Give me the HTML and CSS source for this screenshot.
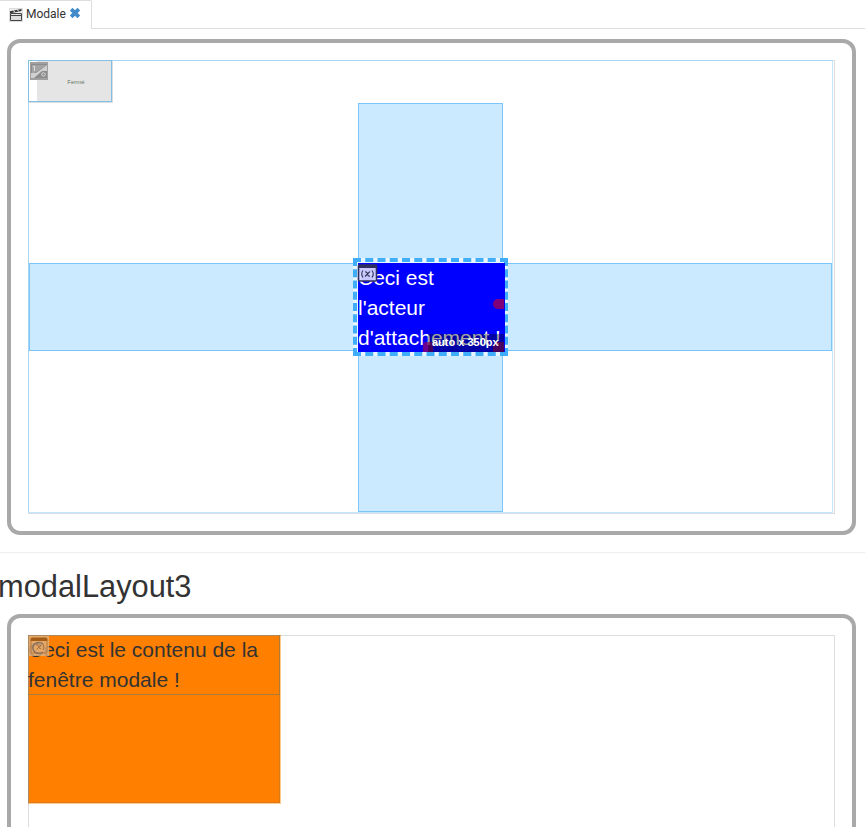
FILE: index.html
```html
<!DOCTYPE html>
<html lang="fr">
<head>
<meta charset="utf-8">
<title>Modale</title>
<link rel="stylesheet" href="styles.css">
</head>
<body>
<nav class="tabs">
  <div class="tab">
    <svg class="clap" viewBox="0 0 14 14"><rect x=".5" y=".5" width="13" height="13" fill="#eee" stroke="#ddd"/><path d="M1 3.2 12.5 1v2L1 5.2z" fill="#333"/><path d="M4 2.5 6 4M8 1.7 10 3.3" stroke="#ddd"/><path d="M1.5 5.5h11v7h-11z" fill="#ddd" stroke="#444"/><path d="M1 7.5h12" stroke="#444"/><path d="M3 6.5h2M7 6.5h2" stroke="#eee"/></svg>
    <span class="name">Modale</span>
    <svg class="close" viewBox="0 0 11 11"><path d="M2 2 9 9M9 2 2 9" stroke="#428bca" stroke-width="3.5"/></svg>
  </div>
  <div class="rest"></div>
</nav>
<main>
  <section class="frame first">
    <div class="canvas">
      <div class="glow"></div>
      <div class="closed"><span>Fermé</span>
        <svg class="badge" viewBox="0 0 18 18"><path fill="#a0a0a0" d="M0 0h18v18H0z"/><path fill="#8c8c8c" d="M1 2h16v14H1z"/><path fill="#a4a4a4" d="M2 3h14L2 13z"/><path d="M1 11h5L17 3v6h-5l-8 7H1z" fill="#d0d0d0"/><path d="M4.500 4v5M3 4.500h2" stroke="#ddd" fill="none"/><circle cx="13.500" cy="12.500" r="1.700" fill="none" stroke="#ddd"/></svg>
      </div>
      <div class="guide vertical"></div>
      <div class="guide horizontal"></div>
      <div class="selection">
        <div class="actor">Ceci est<br>l'acteur<br>d'attachement !</div>
        <svg class="badge var" viewBox="0 0 20 18"><rect x="1" y="1" width="18" height="16" rx="1" fill="#d5d5ff" fill-opacity=".94" stroke="#303060" stroke-width="1.6"/><path fill="#303060" d="M1 1h18v3H1z"/><path d="M5.500 6.500q-2.500 3.500 0 7M14.500 6.500q2.500 3.500 0 7M7.500 8q2-.5 2.500 2t2.500 2M12.500 7.500 7.500 12.500" fill="none" stroke="#333355" stroke-width="1.1"/></svg>
        <i class="handle side"></i>
        <div class="size">auto x 350px</div>
        <i class="handle left"></i>
        <i class="handle corner"></i>
      </div>
    </div>
  </section>
  <hr>
  <h2>modalLayout3</h2>
  <section class="frame second">
    <div class="canvas">
      <div class="modal">
        <div class="content">Ceci est le contenu de la<br>fenêtre modale !</div>
        <svg class="badge orange" viewBox="0 0 20 20"><path d="M0 0h20v20H0z" fill="#ddb382" fill-opacity=".8"/><path d="M2 5V3q0-1 1-1h14q1 0 1 1v2" fill="#a55d16" stroke="#a55d16"/><path d="M2 5v12h16V5" fill="none" stroke="#bd7937"/><path d="M14 8a6 5.500 0 1 0 0 8" fill="none" stroke="#8c7060" stroke-width="1.6"/><path d="M7 9q2-1 2.500 1.500t2.500 2M12 9l-4.500 4.500M14 8q2 3 0 6" fill="none" stroke="#a96b38"/></svg>
      </div>
    </div>
  </section>
</main>
</body>
</html>
```
FILE: styles.css
```css
* { box-sizing: border-box; }
body { margin: 0; height: 827px; overflow: hidden; background: #fff; color: #333; font-family: "Liberation Sans", Arial, sans-serif; }
.tabs { display: flex; height: 29px; }
.tab { display: flex; width: 92px; padding: 6px 0 0 9px; border-top: 1px solid #ddd; border-right: 1px solid #ddd; border-radius: 0 2px 0 0; font: 12px/14px Roboto, sans-serif; }
.rest { flex: 1; border-bottom: 1px solid #ddd; }
.clap { width: 14px; height: 14px; margin-top: 1px; margin-right: 3px; }
.name { width: 40px; margin-right: 3px; white-space: nowrap; }
.close { width: 12px; height: 12px; }
main { height: 798px; overflow: hidden; padding-top: 10px; }
.frame { width: 849px; margin-left: 7px; padding: 17px; border: 4px solid #a9a9a9; border-radius: 13px; }
.first { height: 496px; }
.second { height: 213px; margin-top: 10px; padding-bottom: 0; border-bottom: 0; border-radius: 13px 13px 0 0; }
.canvas { position: relative; width: 807px; height: 454px; border: 1px solid #ddd; }
.second .canvas { height: 192px; border-bottom: 0; }
.glow { position: absolute; left: -1px; top: -1px; width: 805px; height: 453px; border: 1px solid #a8d5ef; border-right-color: #c4e6ff; border-bottom-color: #c4e6ff; }
.closed { position: absolute; left: -1px; top: -1px; width: 84px; height: 42px; padding-left: 12px; border: 1px solid #83c0e6; box-shadow: 1px 1px 0 #ddd; background: linear-gradient(90deg, #fff 8px, #e5e5e5 8px); text-align: center; font: 6px/42px "Liberation Sans", sans-serif; color: #676; }
.badge { position: absolute; left: 1px; top: 1px; width: 18px; height: 18px; }
.guide { position: absolute; background: #cbe9ff; border: 1px solid #7cc5f8; }
.vertical { left: 329px; top: 42px; width: 145px; height: 409px; }
.horizontal { left: 0; top: 202px; width: 803px; height: 88px; }
.selection { position: absolute; left: 324px; top: 197px; width: 155px; height: 98px; padding: 1px; border: 4px dashed #40adfb; background: #eaf6ff; }
.actor { width: 147px; height: 89px; background: #00f; color: #fff; font-size: 21px; line-height: 30px; white-space: nowrap; }
.var { left: 0; top: 2px; width: 21px; height: 18px; }
.handle { position: absolute; width: 11px; height: 10px; background: rgba(178, 0, 70, .72); }
.side { left: 136px; top: 37px; border-radius: 5px 0 0 5px; }
.left { left: 66px; top: 80px; border-radius: 4px 0 0 0; width: 10px; }
.corner { left: 136px; top: 80px; border-radius: 4px 0 0 0; width: 11px; }
.left, .corner { opacity: .85; }
.size { position: absolute; z-index: 1; left: 71px; top: 72px; width: 76px; height: 18px; background: rgba(0, 0, 0, .35); color: #fff; font: bold 11px/17px "Liberation Sans", sans-serif; padding-left: 4px; white-space: nowrap; }
hr { height: 1px; margin: 17px 0 16px; border: 0; background: #eee; }
h2 { margin: 0 0 0 -2px; font-size: 30.8px; line-height: 35px; font-weight: 400; }
.modal { position: absolute; left: -1px; top: -1px; width: 253px; height: 169px; background: #ff8000; border: 1px solid #ad8a60; border-right-color: #ffc98c; border-bottom-color: #ffc98c; box-shadow: inset -1px -1px 0 #d97a1c; }
.content { width: 252px; height: 60px; margin: -1px; border: solid #ad7b39; border-width: 0 1px 1px 0; font-size: 21px; line-height: 30px; white-space: nowrap; }
.orange { left: 0; top: 0; width: 20px; height: 20px; }
```
